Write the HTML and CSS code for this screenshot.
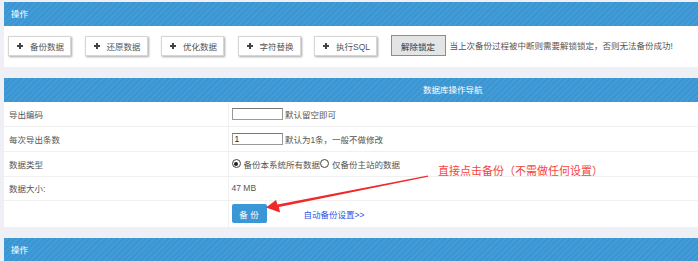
FILE: index.html
```html
<!DOCTYPE html>
<html lang="zh-CN">
  <head>
    <meta charset="UTF-8" />
    <title>数据库操作</title>
    <link rel="stylesheet" href="styles.css">
  </head>
  <body>
    <div class="panel">
      <div class="panel-head">操作</div>
      <div class="panel-body tools">
        <button class="tool"><span class="plus"></span>备份数据</button>
        <button class="tool"><span class="plus"></span>还原数据</button>
        <button class="tool"><span class="plus"></span>优化数据</button>
        <button class="tool"><span class="plus"></span>字符替换</button>
        <button class="tool"><span class="plus"></span>执行SQL</button>
        <button class="unlock">解除锁定</button>
        <span class="tip">当上次备份过程被中断则需要解锁锁定，否则无法备份成功!</span>
      </div>
    </div>

    <div class="panel">
      <div class="panel-head nav-title">数据库操作导航</div>
      <table class="form-table">
        <tr class="r1">
          <td class="label">导出编码</td>
          <td><input type="text" class="field" /> <span class="note">默认留空即可</span></td>
        </tr>
        <tr class="r2">
          <td class="label">每次导出条数</td>
          <td><input type="text" class="field" value="1" /> <span class="note">默认为1条，一般不做修改</span></td>
        </tr>
        <tr class="r3">
          <td class="label">数据类型</td>
          <td>
            <span class="radio checked"></span><span class="note">备份本系统所有数据</span><span class="radio"></span><span class="note">仅备份主站的数据</span>
          </td>
        </tr>
        <tr class="r4">
          <td class="label">数据大小:</td>
          <td>47 MB</td>
        </tr>
        <tr class="r5">
          <td class="label"></td>
          <td><button class="backup">备 份</button><a class="auto-link" href="#">自动备份设置&gt;&gt;</a></td>
        </tr>
      </table>
    </div>

    <div class="panel">
      <div class="panel-head">操作</div>
    </div>

    <div class="callout">直接点击备份（不需做任何设置）</div>
    <svg class="arrow" width="698" height="261" viewBox="0 0 698 261">
      <polygon points="428,175.5 428,176.8 279,207 280,212.5 266,207.5 276,200 277.5,204.5" fill="#f0282a" />
    </svg>
  </body>
</html>
```

FILE: styles.css
```css
* {
  margin: 0;
  padding: 0;
  box-sizing: border-box;
}

body {
  background-color: #eff0f5;
  font-family: "Liberation Sans", "Noto Sans CJK SC", sans-serif;
  font-size: 8.5px;
  color: #555;
  padding: 2px 0 0 4px;
  width: 698px;
  height: 261px;
  overflow: hidden;
  position: relative;
}

.panel {
  width: 694px;
  margin-bottom: 11px;
}

.panel-head {
  height: 24px;
  line-height: 24px;
  padding-left: 7px;
  color: #fff;
  background-color: #3a95d3;
  background-image: repeating-linear-gradient(
    -45deg,
    rgba(255, 255, 255, 0.06) 0 2px,
    transparent 2px 4px
  );
}

.nav-title {
  padding-left: 419px;
}

.panel-body {
  background-color: #fff;
}

.tools {
  height: 41px;
  padding: 10px 0 0 4px;
  display: flex;
  align-items: flex-start;
}

.tool {
  width: 63px;
  height: 20px;
  margin-right: 13.5px;
  background: #fff;
  border: 1px solid #d6d6d6;
  box-shadow: 1px 1px 2px rgba(0, 0, 0, 0.35);
  font-family: inherit;
  font-size: 8.5px;
  color: #555;
  text-align: left;
  padding-left: 8px;
  display: flex;
  align-items: center;
}

/* plus drawn with two bars */
.plus {
  position: relative;
  width: 6px;
  height: 6px;
  margin-right: 7px;
}

.plus::before,
.plus::after {
  content: "";
  position: absolute;
  background: #444;
}

.plus::before {
  left: 0;
  top: 2px;
  width: 6px;
  height: 2px;
}

.plus::after {
  left: 2px;
  top: 0;
  width: 2px;
  height: 6px;
}

.unlock {
  width: 55px;
  height: 21px;
  margin-top: -1px;
  background: #e4e4e4;
  border: 1px solid #8c8c8c;
  font-family: inherit;
  font-size: 8.5px;
  color: #333;
}

.tip {
  margin-left: 4px;
  line-height: 20px;
  color: #555;
}

.form-table {
  width: 694px;
  border-collapse: collapse;
  background-color: #fff;
}

.form-table td {
  border-bottom: 1px solid #f0f0f0;
  padding: 0 0 0 3px;
  vertical-align: middle;
}

.form-table td.label {
  width: 224px;
  padding-left: 5px;
  border-right: 1px solid #f0f0f0;
}

.r1 td { height: 24px; }
.r2 td { height: 25px; }
.r3 td { height: 25px; }
.r4 td { height: 24px; }
.r5 td { height: 27px; border-bottom: none; }

.field {
  width: 51px;
  height: 12px;
  border: 1px solid #999;
  border-top-color: #777;
  font-family: inherit;
  font-size: 8.5px;
  padding-left: 2px;
  vertical-align: middle;
  color: #222;
}

.note {
  vertical-align: middle;
}

.radio {
  display: inline-block;
  width: 9px;
  height: 9px;
  border: 1px solid #444;
  border-radius: 50%;
  vertical-align: middle;
  margin-right: 3px;
  background: #fff;
  position: relative;
}

.radio.checked::after {
  content: "";
  position: absolute;
  left: 1.5px;
  top: 1.5px;
  width: 4px;
  height: 4px;
  border-radius: 50%;
  background: #222;
}

.backup {
  width: 35px;
  height: 19px;
  background: #3a96d4;
  color: #fff;
  border: none;
  border-radius: 2px;
  font-family: inherit;
  font-size: 8.5px;
  vertical-align: middle;
}

.auto-link {
  margin-left: 37px;
  color: #3054e8;
  text-decoration: none;
  vertical-align: middle;
}

.callout {
  position: absolute;
  left: 438px;
  top: 162px;
  font-size: 11px;
  color: #f5433f;
}

.arrow {
  position: absolute;
  left: 0;
  top: 0;
}
```
